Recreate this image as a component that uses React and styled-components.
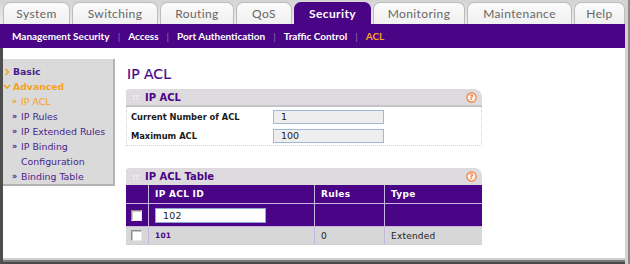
import styled, { createGlobalStyle } from "styled-components";

const GlobalStyle = createGlobalStyle`
  html, body {
    margin: 0;
    padding: 0;
    background: #ffffff;
  }
  * {
    box-sizing: border-box;
  }
`;

const PURPLE = "#4a0486";
const ORANGE = "#f6a21c";

const Frame = styled.div`
  width: 630px;
  height: 264px;
  overflow: hidden;
  display: flex;
  flex-direction: column;
  padding-right: 5px;
  background: #ffffff;
  box-shadow: inset -2px 0 #8a8a8a, inset -5px 0 #d2d2d2;
`;

const TabBar = styled.div`
  height: 24px;
  display: flex;
  align-items: flex-end;
  gap: 2px;
  padding-left: 3px;
  background: linear-gradient(#d4d4d4, #ececec);
`;

const Tab = styled.div`
  width: ${(p) => p.$w}px;
  height: 22px;
  display: flex;
  align-items: center;
  justify-content: center;
  border: 1px solid ${(p) => (p.$active ? PURPLE : "#bcbcbc")};
  border-bottom: none;
  border-radius: 7px 7px 0 0;
  background: ${(p) =>
    p.$active ? PURPLE : "linear-gradient(#fbfbfb, #f0f0f0)"};
  color: ${(p) => (p.$active ? "#ffffff" : "#666666")};
  font-family: Lato, "Open Sans", sans-serif;
  font-size: 12px;
  font-weight: ${(p) => (p.$active ? 700 : 400)};
  letter-spacing: 0.4px;
`;

const SubNav = styled.div`
  height: 24px;
  display: flex;
  align-items: center;
  padding-left: 12px;
  background: ${PURPLE};
  font-family: Lato, "Open Sans", sans-serif;
  font-size: 10px;
  font-weight: 700;
`;

const SubLink = styled.span`
  color: ${(p) => (p.$active ? ORANGE : "#ffffff")};
`;

const Sep = styled.span`
  color: #8d7cb8;
  font-weight: 400;
  margin: 0 8px;
`;

const Content = styled.div`
  flex: 1;
  display: flex;
  align-items: flex-start;
  padding-left: 3px;
  box-shadow: inset 3px 0 #4e4e4e, inset 0 -2px #4a4a4a, inset 0 -4px #7a7a7a,
    inset 0 -6px #cfcfcf;
  font-family: "DejaVu Sans", Verdana, sans-serif;
`;

const Sidebar = styled.div`
  width: 112px;
  height: 127px;
  margin-top: 11px;
  padding-top: 5px;
  background: #dadada;
  border-right: 2px solid #b2b2b2;
  border-bottom: 2px solid #b2b2b2;
`;

const NavItem = styled.div`
  height: 15px;
  display: flex;
  align-items: center;
  padding-left: ${(p) => p.$indent}px;
  color: ${(p) => (p.$active ? ORANGE : "#4b1d8c")};
  font-size: ${(p) => (p.$bold ? "9.3px" : "9.4px")};
  font-weight: ${(p) => (p.$bold ? 700 : 400)};
  white-space: nowrap;
`;

const Marker = styled.span`
  width: 9px;
  display: inline-flex;
  color: ${(p) => (p.$active ? ORANGE : "#4b1d8c")};
  font-size: 8px;
  font-weight: 700;
`;

const Chevron = styled.svg`
  width: 10px;
  height: 8px;
  flex: none;
`;

const Main = styled.div`
  margin-left: 11px;
  width: 356px;
  display: flex;
  flex-direction: column;
`;

const Title = styled.h1`
  margin: 17px 0 6px 1px;
  height: 18px;
  line-height: 18px;
  font-size: 14px;
  font-weight: 400;
  color: ${PURPLE};
  -webkit-text-stroke: 0.2px ${PURPLE};
`;

const Panel = styled.div`
  display: flex;
  flex-direction: column;
  margin-bottom: ${(p) => p.$mb}px;
`;

const PanelHead = styled.div`
  height: ${(p) => p.$h}px;
  display: flex;
  align-items: center;
  padding: 0 5px 0 6px;
  background: #dedbde;
  border-radius: 3px 8px 0 0;
  border-bottom: ${(p) => (p.$line ? "2px solid #c6c4c6" : "none")};
  color: ${PURPLE};
  font-size: 10px;
  font-weight: 700;
`;

const Grip = styled.span`
  width: 13px;
  color: #f4f4f4;
  font-size: 9px;
`;

const HeadTitle = styled.span`
  flex: 1;
`;

const HelpIcon = () => (
  <svg width="11" height="11" viewBox="0 0 11 11">
    <circle cx="5.5" cy="5.5" r="4.6" fill="#fff3ea" stroke="#f27a3a" strokeWidth="1.2" />
    <text
      x="5.5"
      y="8.3"
      textAnchor="middle"
      fontSize="7.5"
      fontWeight="700"
      fontFamily="DejaVu Sans, sans-serif"
      fill="#f27a3a"
    >
      ?
    </text>
  </svg>
);

const PanelBody = styled.div`
  border: 1px dotted #cfcfcf;
  border-top: none;
`;

const FieldRow = styled.div`
  height: 19px;
  display: flex;
  align-items: center;
  padding-left: 4px;
`;

const FieldLabel = styled.span`
  width: 142px;
  font-size: 8.3px;
  font-weight: 700;
  color: #1a1a1a;
`;

const FieldBox = styled.div`
  width: 111px;
  height: 14px;
  display: flex;
  align-items: center;
  padding-left: 7px;
  background: #eeeeee;
  border: 1px solid #9fb8d8;
  font-size: 9.5px;
  color: #222;
`;

const Table = styled.div`
  display: grid;
  grid-template-columns: 22px 165px 69px 1fr;
  gap: 1px;
  background: #c4b8e0;
  border-bottom: 1px solid #cfcfcf;
`;

const Cell = styled.div`
  height: ${(p) => p.$h}px;
  display: flex;
  align-items: center;
  padding-left: ${(p) => p.$pl ?? 6}px;
  background: ${(p) => (p.$grey ? "#d7d7d7" : PURPLE)};
  color: ${(p) => (p.$grey ? "#222" : "#ffffff")};
  font-size: 9px;
  font-weight: ${(p) => (p.$head ? 700 : 400)};
  letter-spacing: ${(p) => (p.$head ? "0.3px" : "0.2px")};
`;

const Check = styled.div`
  width: 11px;
  height: 11px;
  background: #ffffff;
  border: 1px solid #8c8c8c;
  border-right-color: #e8e8e8;
  border-bottom-color: #e8e8e8;
  box-shadow: inset 1px 1px #c8c8c8;
`;

const IdInput = styled.div`
  width: 111px;
  height: 15px;
  display: flex;
  align-items: center;
  padding-left: 7px;
  background: #ffffff;
  border: 1px solid #8fa8cf;
  font-size: 9.5px;
  color: #222;
`;

const IdLink = styled.span`
  color: ${PURPLE};
  font-weight: 700;
  font-size: 7.5px;
`;

const tabs = [
  ["System", 67],
  ["Switching", 86],
  ["Routing", 74],
  ["QoS", 56],
  ["Security", 77],
  ["Monitoring", 92],
  ["Maintenance", 105],
  ["Help", 51],
];

const subLinks = [
  "Management Security",
  "Access",
  "Port Authentication",
  "Traffic Control",
  "ACL",
];

const RightChevron = () => (
  <Chevron viewBox="0 0 10 8">
    <path d="M2.5 1 L5.5 4 L2.5 7" fill="none" stroke={ORANGE} strokeWidth="1.6" />
  </Chevron>
);

const DownChevron = () => (
  <Chevron viewBox="0 0 10 8">
    <path d="M1 2 L4 5 L7 2" fill="none" stroke={ORANGE} strokeWidth="1.6" />
  </Chevron>
);

const App = () => {
  return (
    <>
      <GlobalStyle />
      <Frame>
        <TabBar>
          {tabs.map(([name, w]) => (
            <Tab key={name} $w={w} $active={name === "Security"}>
              {name}
            </Tab>
          ))}
        </TabBar>
        <SubNav>
          {subLinks.map((l, i) => (
            <span key={l}>
              {i > 0 && <Sep>|</Sep>}
              <SubLink $active={l === "ACL"}>{l}</SubLink>
            </span>
          ))}
        </SubNav>
        <Content>
          <Sidebar>
            <NavItem $indent={0} $bold>
              <RightChevron />
              Basic
            </NavItem>
            <NavItem $indent={0} $bold $active>
              <DownChevron />
              Advanced
            </NavItem>
            <NavItem $indent={9} $active>
              <Marker $active>»</Marker>IP ACL
            </NavItem>
            <NavItem $indent={9}>
              <Marker>»</Marker>IP Rules
            </NavItem>
            <NavItem $indent={9}>
              <Marker>»</Marker>IP Extended Rules
            </NavItem>
            <NavItem $indent={9}>
              <Marker>»</Marker>IP Binding
            </NavItem>
            <NavItem $indent={18}>Configuration</NavItem>
            <NavItem $indent={9}>
              <Marker>»</Marker>Binding Table
            </NavItem>
          </Sidebar>
          <Main>
            <Title>IP ACL</Title>
            <Panel $mb={22}>
              <PanelHead $h={18} $line>
                <Grip>::</Grip>
                <HeadTitle>IP ACL</HeadTitle>
                <HelpIcon />
              </PanelHead>
              <PanelBody>
                <FieldRow>
                  <FieldLabel>Current Number of ACL</FieldLabel>
                  <FieldBox>1</FieldBox>
                </FieldRow>
                <FieldRow>
                  <FieldLabel>Maximum ACL</FieldLabel>
                  <FieldBox>100</FieldBox>
                </FieldRow>
              </PanelBody>
            </Panel>
            <Panel $mb={0}>
              <PanelHead $h={17}>
                <Grip>::</Grip>
                <HeadTitle>IP ACL Table</HeadTitle>
                <HelpIcon />
              </PanelHead>
              <Table>
                <Cell $h={18} $head />
                <Cell $h={18} $head>IP ACL ID</Cell>
                <Cell $h={18} $head>Rules</Cell>
                <Cell $h={18} $head>Type</Cell>

                <Cell $h={22} $pl={5}>
                  <Check />
                </Cell>
                <Cell $h={22}>
                  <IdInput>102</IdInput>
                </Cell>
                <Cell $h={22} />
                <Cell $h={22} />

                <Cell $h={17} $pl={5} $grey>
                  <Check />
                </Cell>
                <Cell $h={17} $grey>
                  <IdLink>101</IdLink>
                </Cell>
                <Cell $h={17} $grey>0</Cell>
                <Cell $h={17} $grey>Extended</Cell>
              </Table>
            </Panel>
          </Main>
        </Content>
      </Frame>
    </>
  );
};

export default App;
